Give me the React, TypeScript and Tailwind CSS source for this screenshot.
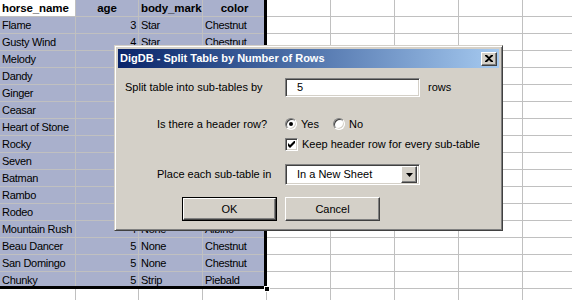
const rows: [string, string, string, string][] = [
  ["Flame", "3", "Star", "Chestnut"],
  ["Gusty Wind", "4", "Star", "Chestnut"],
  ["Melody", "", "", ""],
  ["Dandy", "", "", ""],
  ["Ginger", "", "", ""],
  ["Ceasar", "", "", ""],
  ["Heart of Stone", "", "", ""],
  ["Rocky", "", "", ""],
  ["Seven", "", "", ""],
  ["Batman", "", "", ""],
  ["Rambo", "", "", ""],
  ["Rodeo", "", "", ""],
  ["Mountain Rush", "4", "None", "Albino"],
  ["Beau Dancer", "5", "None", "Chestnut"],
  ["San Domingo", "5", "None", "Chestnut"],
  ["Chunky", "5", "Strip", "Piebald"],
];

const cell = "h-[17px] border-r border-b border-[#c0c0c0] px-[2px] leading-[16px] whitespace-nowrap overflow-hidden";
const sel = "bg-[#a9b0cc]";
const extra = ["w-[64px]", "w-[64px]", "w-[64px]", "w-[64px]", "w-[64px]"];

function Extra() {
  return (
    <>
      {extra.map((w, i) => (
        <div key={i} className={`${cell} ${w} shrink-0 bg-white`} />
      ))}
    </>
  );
}

function Sheet() {
  return (
    <div className="relative text-[11px] tracking-[-0.3px] text-black" style={{ fontFamily: '"Liberation Sans", Arial, sans-serif' }}>
      <div className="flex font-bold text-[11.5px] tracking-[-0.1px]">
        <div className={`${cell} w-[76px] shrink-0 bg-white`}>horse_name</div>
        <div className={`${cell} w-[63px] shrink-0 ${sel} text-center`}>age</div>
        <div className={`${cell} w-[64px] shrink-0 ${sel}`}>body_mark</div>
        <div className={`${cell} w-[64px] shrink-0 ${sel} text-center`}>color</div>
        <Extra />
      </div>
      {rows.map((r) => (
        <div key={r[0]} className="flex">
          <div className={`${cell} w-[76px] shrink-0 ${sel}`}>{r[0]}</div>
          <div className={`${cell} w-[63px] shrink-0 ${sel} text-right`}>{r[1]}</div>
          <div className={`${cell} w-[64px] shrink-0 ${sel}`}>{r[2]}</div>
          <div className={`${cell} w-[64px] shrink-0 ${sel}`}>{r[3]}</div>
          <Extra />
        </div>
      ))}
      <div className="flex">
        <div className={`${cell} w-[76px] shrink-0 bg-white`} />
        <div className={`${cell} w-[63px] shrink-0 bg-white`} />
        <div className={`${cell} w-[64px] shrink-0 bg-white`} />
        <div className={`${cell} w-[64px] shrink-0 bg-white`} />
        <Extra />
      </div>
      {/* selection outline + fill handle */}
      <div className="absolute left-[-3px] top-[-3px] w-[270px] h-[292px] border-[3px] border-black pointer-events-none" />
      <div className="absolute left-[264px] top-[286px] w-[6px] h-[6px] bg-black border border-white" />
    </div>
  );
}

const raised =
  "bg-[#d4d0c8] border border-t-white border-l-white border-r-[#404040] border-b-[#404040] shadow-[inset_-1px_-1px_0_#808080]";
const sunken =
  "bg-white border border-t-[#808080] border-l-[#808080] border-r-white border-b-white shadow-[inset_1px_1px_0_#404040,inset_-1px_-1px_0_#d4d0c8]";

function Dialog() {
  return (
    <div
      className="absolute left-[114px] top-[45px] w-[389px] h-[186px] bg-[#d4d0c8] border border-t-[#d4d0c8] border-l-[#d4d0c8] border-r-[#404040] border-b-[#404040] shadow-[inset_1px_1px_0_#ffffff,inset_-1px_-1px_0_#808080] p-[3px] text-[11px] text-black"
      style={{ fontFamily: '"Liberation Sans", Tahoma, sans-serif' }}
    >
      <div className="h-[19px] flex items-center justify-between pl-[2px] pr-[2px] bg-gradient-to-r from-[#0a246a] to-[#a6caf0]">
        <span className="text-white font-bold text-[11px]">DigDB - Split Table by Number of Rows</span>
        <div className={`${raised} w-[16px] h-[14px] flex items-center justify-center`}>
          <svg width="8" height="7" viewBox="0 0 8 7">
            <path d="M0 0h2l2 2 2-2h2v1L5 3.5 8 6v1H6L4 5 2 7H0V6l3-2.5L0 1z" fill="#000" />
          </svg>
        </div>
      </div>

      <div className="flex flex-col">
        <div className="flex items-center h-[19px] mt-[10px]">
          <div className="w-[167px] pl-[7px]">Split table into sub-tables by</div>
          <div className={`${sunken} w-[135px] h-[19px] pl-[11px] leading-[17px]`}>5</div>
          <div className="ml-[8px]">rows</div>
        </div>

        <div className="flex items-center h-[16px] mt-[19px]">
          <div className="w-[167px] pl-[39px]">Is there a header row?</div>
          <div className="flex items-center gap-[4px]">
            <div className={`${sunken} w-[12px] h-[12px] rounded-full flex items-center justify-center`}>
              <div className="w-[4px] h-[4px] rounded-full bg-black" />
            </div>
            <span>Yes</span>
          </div>
          <div className="flex items-center gap-[4px] ml-[14px]">
            <div className={`${sunken} w-[12px] h-[12px] rounded-full`} />
            <span>No</span>
          </div>
        </div>

        <div className="flex items-center h-[16px] mt-[4px]">
          <div className="w-[167px]" />
          <div className={`${sunken} w-[13px] h-[13px] flex items-center justify-center`}>
            <svg width="7" height="7" viewBox="0 0 7 7">
              <path d="M0 2v3l2 2 5-5V-1L2 4z" fill="#000" />
            </svg>
          </div>
          <span className="ml-[4px]">Keep header row for every sub-table</span>
        </div>

        <div className="flex items-center h-[21px] mt-[12px]">
          <div className="w-[167px] pl-[39px]">Place each sub-table in</div>
          <div className={`${sunken} w-[135px] h-[21px] flex items-center justify-between pl-[11px] pr-[2px]`}>
            <span>In a New Sheet</span>
            <div className={`${raised} w-[16px] h-[17px] flex items-center justify-center`}>
              <svg width="7" height="4" viewBox="0 0 7 4">
                <path d="M0 0h7L3.5 4z" fill="#000" />
              </svg>
            </div>
          </div>
        </div>

        <div className="flex items-center h-[24px] mt-[12px] pl-[64px] gap-[8px]">
          <div className="w-[95px] h-[24px] border border-black">
            <div className={`${raised} w-full h-full flex items-center justify-center`}>OK</div>
          </div>
          <div className={`${raised} w-[95px] h-[24px] flex items-center justify-center`}>Cancel</div>
        </div>
      </div>
    </div>
  );
}

export default function App() {
  return (
    <div className="relative w-[572px] h-[300px] overflow-hidden bg-white">
      <Sheet />
      <Dialog />
    </div>
  );
}
